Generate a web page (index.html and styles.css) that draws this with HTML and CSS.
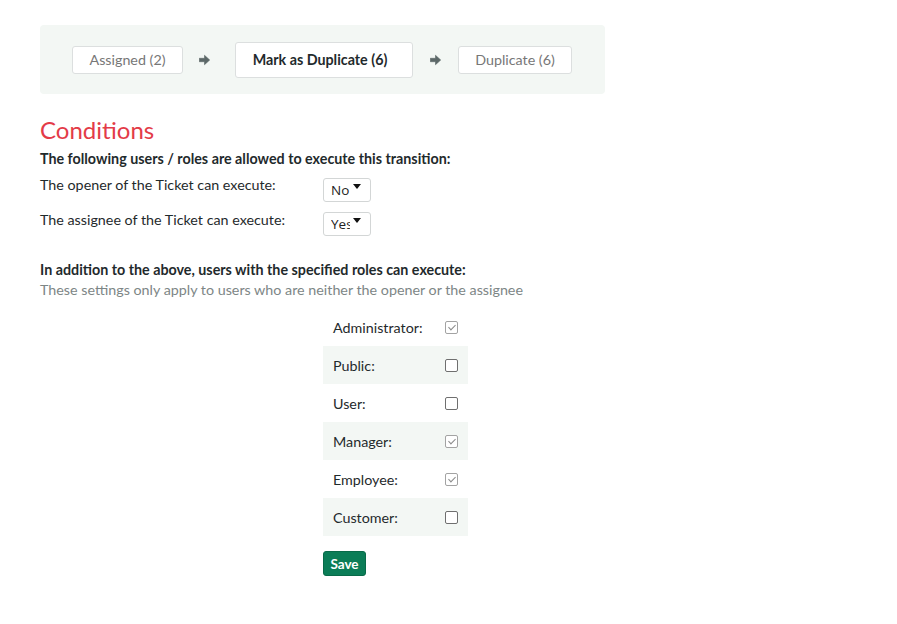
FILE: index.html
```html
<!DOCTYPE html>
<html>
<head>
<meta charset="utf-8">
<link rel="stylesheet" href="styles.css">
</head>
<body>
<div class="page">
  <div class="flow">
    <span class="step step-1">Assigned (2)</span>
    <svg class="arrow arrow-1" width="11" height="12" viewBox="0 0 11 12"><path d="M0.3 4.3h5.2V1.3l5.2 4.7-5.2 4.7V7.7H0.3z" fill="#5c6868" stroke="#5c6868" stroke-width="0.6" stroke-linejoin="round"/></svg>
    <span class="step step-active">Mark as Duplicate (6)</span>
    <svg class="arrow arrow-2" width="11" height="12" viewBox="0 0 11 12"><path d="M0.3 4.3h5.2V1.3l5.2 4.7-5.2 4.7V7.7H0.3z" fill="#5c6868" stroke="#5c6868" stroke-width="0.6" stroke-linejoin="round"/></svg>
    <span class="step step-3">Duplicate (6)</span>
  </div>

  <h2 class="title">Conditions</h2>
  <p class="lead">The following users / roles are allowed to execute this transition:</p>
  <div class="field">
    <label class="field-label">The opener of the Ticket can execute:</label>
    <span class="select"><span class="select-text">No</span><span class="caret"></span></span>
  </div>
  <div class="field field-2">
    <label class="field-label">The assignee of the Ticket can execute:</label>
    <span class="select"><span class="select-text">Yes</span><span class="caret"></span></span>
  </div>

  <p class="lead lead-2">In addition to the above, users with the specified roles can execute:</p>
  <p class="note">These settings only apply to users who are neither the opener or the assignee</p>

  <div class="roles">
    <div class="role"><span>Administrator:</span><span class="cb cb-on"></span></div>
    <div class="role role-alt"><span>Public:</span><span class="cb"></span></div>
    <div class="role"><span>User:</span><span class="cb"></span></div>
    <div class="role role-alt"><span>Manager:</span><span class="cb cb-on"></span></div>
    <div class="role"><span>Employee:</span><span class="cb cb-on"></span></div>
    <div class="role role-alt"><span>Customer:</span><span class="cb"></span></div>
    <button class="save">Save</button>
  </div>
</div>
</body>
</html>
```
FILE: styles.css
```css
* { box-sizing: border-box; }
html, body { margin: 0; padding: 0; background: #fff; }
body {
  font-family: Lato, "Open Sans", sans-serif;
  font-size: 14.3px;
  color: #1f2a2c;
}
.page { padding: 25px 0 0 40px; }

.flow {
  width: 565px;
  height: 69px;
  background: #f3f7f4;
  border-radius: 4px;
  display: flex;
  align-items: center;
  padding-left: 32px;
}
.step {
  height: 28px;
  border: 1px solid #dcdfdf;
  border-radius: 3px;
  background: #fff;
  color: #777;
  font-size: 14.3px;
  display: flex;
  align-items: center;
  justify-content: center;
  flex: none;
}
.step-1 { width: 111px; }
.step-3 { width: 114px; }
.step-active {
  width: 178px;
  height: 36px;
  color: #1f2a2c;
  font-weight: bold;
  padding-right: 8px;
}
.arrow { flex: none; }
.arrow-1 { margin: 0 25px 0 16px; }
.arrow-2 { margin: 0 17px 0 17px; }

.title {
  margin: 21px 0 0;
  font-size: 24px;
  font-weight: normal;
  color: #e33b48;
  line-height: 30px;
}
.lead {
  margin: 4px 0 0;
  font-weight: bold;
  line-height: 20px;
}
.field {
  display: flex;
  align-items: center;
  margin-top: 9px;
}
.field-2 { margin-top: 10px; }
.field-label { width: 283px; line-height: 20px; position: relative; top: -5px; }
.field-2 .field-label { top: -4px; }
.select {
  position: relative;
  width: 48px;
  height: 24px;
  border: 1px solid #d3d6d6;
  border-radius: 3px;
  overflow: hidden;
  display: flex;
  align-items: center;
  padding-left: 7px;
  font-family: "Open Sans", sans-serif;
  font-size: 13.5px;
  color: #222;
}
.select-text { width: 19px; overflow: hidden; white-space: nowrap; }
.caret {
  position: absolute;
  left: 29px;
  top: 5px;
  border-left: 4px solid transparent;
  border-right: 4px solid transparent;
  border-top: 5px solid #111;
}
.lead-2 { margin-top: 24px; }
.note { margin: 0; color: #7d8686; line-height: 20px; }

.roles {
  margin: 8px 0 0 283px;
  width: 145px;
}
.role {
  height: 38px;
  display: flex;
  align-items: center;
  justify-content: space-between;
  padding: 0 10px 0 10px;
  font-size: 14.3px;
}
.role-alt { background: #f3f7f4; }
.cb {
  width: 13px;
  height: 13px;
  border: 1px solid #6f6f6f;
  border-radius: 2px;
  background: #fff;
  position: relative;
}
.cb-on { border-color: #a3a3a3; }
.cb-on::after {
  content: "";
  position: absolute;
  left: 3.5px;
  top: 1px;
  width: 3px;
  height: 6px;
  border-right: 1.3px solid #8a8a8a;
  border-bottom: 1.3px solid #8a8a8a;
  transform: rotate(45deg);
}
.save {
  margin-top: 15px;
  width: 43px;
  height: 25px;
  background: #0b7d57;
  border: 1px solid #086a49;
  border-radius: 3px;
  color: #fff;
  font-family: Lato, sans-serif;
  font-size: 13.5px;
  font-weight: bold;
  padding: 0;
}
```
